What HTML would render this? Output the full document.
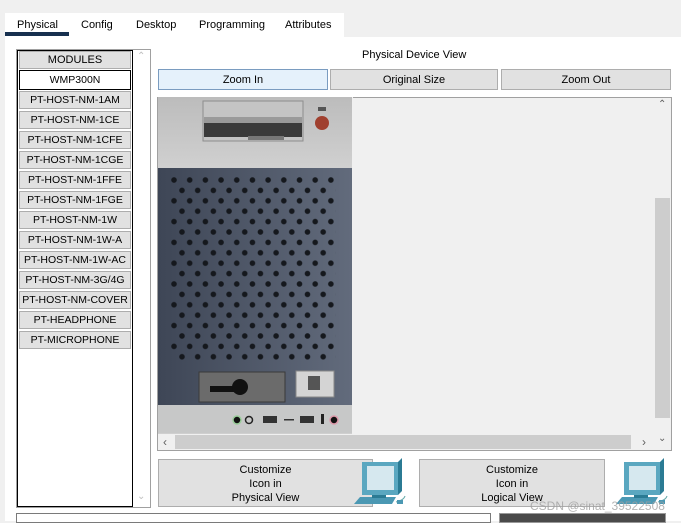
<!DOCTYPE html><html><head><style>
*{margin:0;padding:0;box-sizing:border-box}
body{width:681px;height:521px;background:#f0f0f0;font-family:"Liberation Sans",Arial,sans-serif;font-size:11px;color:#000;position:relative;overflow:hidden}
.a{position:absolute}
.tab{position:absolute;top:19px;font-size:11px}
.mod{position:absolute;left:19px;width:112px;height:18px;background:#e1e1e1;border:1px solid #adadad;text-align:center;line-height:17px;font-size:10.5px}
.btn{position:absolute;top:69px;height:21px;background:#e1e1e1;border:1px solid #adadad;text-align:center;line-height:20px;font-size:11px}
</style></head><body>
<div class="a" style="left:5px;top:13px;width:339px;height:24px;background:#fff"></div>
<div class="a" style="left:5px;top:37px;width:676px;height:484px;background:#fff"></div>
<div class="tab" style="left:17px">Physical</div>
<div class="tab" style="left:81px">Config</div>
<div class="tab" style="left:136px">Desktop</div>
<div class="tab" style="left:199px">Programming</div>
<div class="tab" style="left:285px">Attributes</div>
<div class="a" style="left:5px;top:32px;width:64px;height:4px;background:#17304f"></div>

<div class="a" style="left:16px;top:49px;width:135px;height:459px;border:1px solid #a0a0a0;background:#fff"></div>
<div class="a" style="left:17px;top:50px;width:116px;height:457px;border:1px solid #000;background:#fff"></div>
<div class="a" style="left:137px;top:51px;color:#c0c0c0;font-size:10px">&#8963;</div>
<div class="a" style="left:137px;top:491px;color:#c0c0c0;font-size:10px">&#8964;</div>
<div class="mod" style="top:51px;font-size:11px">MODULES</div>
<div class="mod" style="top:70px;height:20px;background:#fff;border:1px solid #000;line-height:19px">WMP300N</div>
<div class="mod" style="top:91px">PT-HOST-NM-1AM</div>
<div class="mod" style="top:111px">PT-HOST-NM-1CE</div>
<div class="mod" style="top:131px">PT-HOST-NM-1CFE</div>
<div class="mod" style="top:151px">PT-HOST-NM-1CGE</div>
<div class="mod" style="top:171px">PT-HOST-NM-1FFE</div>
<div class="mod" style="top:191px">PT-HOST-NM-1FGE</div>
<div class="mod" style="top:211px">PT-HOST-NM-1W</div>
<div class="mod" style="top:231px">PT-HOST-NM-1W-A</div>
<div class="mod" style="top:251px">PT-HOST-NM-1W-AC</div>
<div class="mod" style="top:271px">PT-HOST-NM-3G/4G</div>
<div class="mod" style="top:291px">PT-HOST-NM-COVER</div>
<div class="mod" style="top:311px">PT-HEADPHONE</div>
<div class="mod" style="top:331px">PT-MICROPHONE</div>

<div class="a" style="left:362px;top:49px">Physical Device View</div>
<div class="btn" style="left:158px;width:170px;background:#e5f1fb;border-color:#7a9cc0">Zoom In</div>
<div class="btn" style="left:330px;width:168px">Original Size</div>
<div class="btn" style="left:501px;width:170px">Zoom Out</div>

<div class="a" style="left:157px;top:97px;width:515px;height:354px;border:1px solid #a0a0a0;background:#f0f0f0"></div>
<div class="a" style="left:655px;top:114px;width:15px;height:304px;background:#f0f0f0"></div>
<div class="a" style="left:655px;top:198px;width:15px;height:220px;background:#cdcdcd"></div>
<div class="a" style="left:658px;top:99px;font-size:10px;color:#606060">&#8963;</div>
<div class="a" style="left:658px;top:433px;font-size:10px;color:#606060">&#8964;</div>
<div class="a" style="left:158px;top:434px;width:497px;height:16px;background:#f0f0f0"></div>
<div class="a" style="left:175px;top:435px;width:456px;height:14px;background:#cdcdcd"></div>
<div class="a" style="left:163px;top:435px;font-size:12px;color:#606060">&lsaquo;</div>
<div class="a" style="left:642px;top:435px;font-size:12px;color:#606060">&rsaquo;</div>

<svg class="a" style="left:158px;top:97px" width="195" height="337" viewBox="0 0 195 337">
<defs>
<linearGradient id="g" x1="0" x2="1"><stop offset="0" stop-color="#3e4656"/><stop offset="1" stop-color="#626b7c"/></linearGradient>
<linearGradient id="t" x1="0" x2="0" y1="0" y2="1"><stop offset="0" stop-color="#bcbcbc"/><stop offset="1" stop-color="#d0d0d0"/></linearGradient>
</defs>
<rect width="195" height="337" fill="#cfcfcf"/>
<rect x="0" y="0" width="194" height="71" fill="url(#t)"/>
<rect x="45" y="4" width="100" height="40" fill="#c4c4c4" stroke="#8d8d8d"/>
<rect x="46" y="20" width="98" height="12" fill="#9a9a9a"/>
<rect x="46" y="26" width="98" height="14" fill="#3a3a3a"/>
<rect x="90" y="39" width="36" height="4" fill="#777"/>
<rect x="160" y="10" width="8" height="4" fill="#555"/>
<circle cx="164" cy="26" r="7" fill="#a0402f"/>
<rect x="0" y="71" width="194" height="237" fill="url(#g)"/>
<rect x="41" y="275" width="86" height="30" fill="#6b6b6b" stroke="#3a3a3a"/>
<rect x="52" y="289" width="26" height="6" fill="#111"/>
<circle cx="82" cy="290" r="8" fill="#111"/>
<rect x="138" y="274" width="38" height="26" fill="#d4d4d4" stroke="#888"/>
<rect x="150" y="279" width="12" height="14" fill="#555"/>
<rect x="0" y="308" width="194" height="28" fill="#c7c8c8"/>
<rect x="194" y="0" width="1" height="337" fill="#f0f0f0"/>
<circle cx="79" cy="323" r="4" fill="#111" stroke="#9c9" stroke-width="1.5"/>
<circle cx="91" cy="323" r="3.5" fill="none" stroke="#222" stroke-width="1.5"/>
<rect x="105" y="319" width="14" height="7" fill="#333"/>
<rect x="142" y="319" width="14" height="7" fill="#333"/>
<rect x="126" y="322" width="10" height="1.5" fill="#333"/>
<rect x="163" y="317" width="3" height="10" fill="#222"/>
<circle cx="176" cy="323" r="4" fill="#111" stroke="#d9a" stroke-width="1.5"/>
</svg>
<div class="a" style="left:170px;top:174px;width:166px;height:188px;background-image:radial-gradient(circle,#15181d 2.4px,transparent 3.1px),radial-gradient(circle,#15181d 2.4px,transparent 3.1px);background-size:15.7px 20.8px,15.7px 20.8px;background-position:-3.85px -4.4px,4.15px 6px"></div>

<div class="a" style="left:158px;top:459px;width:215px;height:48px;background:#e1e1e1;border:1px solid #adadad;text-align:center;line-height:14px;padding-top:3px">Customize<br>Icon in<br>Physical View</div>
<div class="a" style="left:419px;top:459px;width:186px;height:48px;background:#e1e1e1;border:1px solid #adadad;text-align:center;line-height:14px;padding-top:3px">Customize<br>Icon in<br>Logical View</div>

<svg class="a" style="left:352px;top:458px" width="56" height="52" viewBox="0 0 56 52">
<path d="M10 4 H46 L50 0 V33 L46 37 H10 Z" fill="#2b7b94"/>
<rect x="10" y="4" width="36" height="33" fill="#5aa7c0"/>
<rect x="15" y="8" width="27" height="24" fill="#d6e8ef"/>
<path d="M2 46 L8 39 H44 L40 46 Z" fill="#4b98b3"/>
<rect x="20" y="37" width="14" height="3" fill="#2b7b94"/>
<path d="M44 44 Q52 42 53 38" stroke="#6aa" fill="none"/>
<rect x="45" y="42" width="6" height="4" fill="#4b98b3"/>
</svg>
<svg class="a" style="left:614px;top:458px" width="56" height="52" viewBox="0 0 56 52">
<path d="M10 4 H46 L50 0 V33 L46 37 H10 Z" fill="#2b7b94"/>
<rect x="10" y="4" width="36" height="33" fill="#5aa7c0"/>
<rect x="15" y="8" width="27" height="24" fill="#d6e8ef"/>
<path d="M2 46 L8 39 H44 L40 46 Z" fill="#4b98b3"/>
<rect x="20" y="37" width="14" height="3" fill="#2b7b94"/>
<path d="M44 44 Q52 42 53 38" stroke="#6aa" fill="none"/>
<rect x="45" y="42" width="6" height="4" fill="#4b98b3"/>
</svg>
<div class="a" style="left:530px;top:499px;color:rgba(160,160,160,0.8);font-size:12px">CSDN @sinat_39522508</div>

<div class="a" style="left:16px;top:513px;width:475px;height:10px;border:1px solid #7a7a7a;background:#fff"></div>
<div class="a" style="left:499px;top:513px;width:167px;height:10px;border:1px solid #999;background:#4a4a4a"></div>
</body></html>
